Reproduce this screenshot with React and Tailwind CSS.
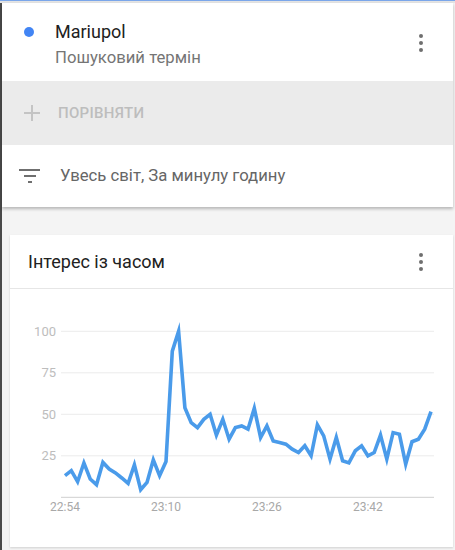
import React from 'react'

// interest values, one per minute starting 22:54
const values = [
  13, 16, 9.4, 20.7, 11, 7.6, 21, 17, 14.7, 11.6, 8.4, 19.5, 4.6, 9, 22.5, 13, 21.5, 88, 100, 54,
  45, 42, 47, 50, 37.5, 47, 35, 42, 43, 41, 53.6, 36, 43, 34, 33, 32, 29, 27, 31, 25,
  43.6, 37, 23, 36, 22, 20.7, 28, 31, 25, 27, 37.5, 23, 39, 38, 20, 33.5, 35, 41, 51.6,
]

const X0 = 65
const STEP = 6.31
const BASE = 498.3
const SCALE = 1.66

function Kebab() {
  return (
    <div className="flex flex-col items-center gap-[3px]">
      <span className="w-[4px] h-[4px] rounded-full bg-[#6f6f6f]" />
      <span className="w-[4px] h-[4px] rounded-full bg-[#6f6f6f]" />
      <span className="w-[4px] h-[4px] rounded-full bg-[#6f6f6f]" />
    </div>
  )
}

function Chart() {
  const pts = values.map((v, i) => `${(X0 + i * STEP).toFixed(1)},${(BASE - v * SCALE).toFixed(1)}`).join(' ')
  const grid = [100, 75, 50, 25]
  const times = [
    { t: '22:54', i: 0 },
    { t: '23:10', i: 16 },
    { t: '23:26', i: 32 },
    { t: '23:42', i: 48 },
  ]
  return (
    <svg width="442" height="258" viewBox="10 290 442 258" className="block">
      {grid.map((g) => (
        <g key={g}>
          <line x1="61" x2="434" y1={BASE - g * SCALE} y2={BASE - g * SCALE} stroke="#ebebeb" strokeWidth="1" />
          <text
            x="56"
            y={BASE - g * SCALE + 4.5}
            textAnchor="end"
            fontSize="13"
            fill="#bdbdbd"
            fontFamily="Roboto, sans-serif"
          >
            {g}
          </text>
        </g>
      ))}
      <line x1="61" x2="434" y1={BASE} y2={BASE} stroke="#cfcfcf" strokeWidth="1" />
      {times.map((t) => (
        <text
          key={t.t}
          x={X0 + t.i * STEP}
          y="512"
          textAnchor="middle"
          fontSize="12"
          fill="#a8a8a8"
          fontFamily="Roboto, sans-serif"
        >
          {t.t}
        </text>
      ))}
      <polyline points={pts} fill="none" stroke="#4a9bea" strokeWidth="3.6" strokeLinejoin="miter" strokeMiterlimit="6" />
    </svg>
  )
}

export default function App() {
  return (
    <div className="w-[455px] h-[550px] overflow-hidden bg-[#f4f4f4] flex flex-col font-['Roboto',sans-serif]">
      {/* top edge */}
      <div className="h-[1px] bg-[#7aa6ea]" />
      <div className="h-[2px] bg-[#e3e3e3]" />

      <div className="flex flex-1">
        <div className="w-[2px] bg-[#4a4a4a]" />

        <div className="flex-1 mr-[2px] flex flex-col">
          {/* search term panel */}
          <div className="bg-white shadow-[0_2px_3px_rgba(0,0,0,0.25)] z-10">
            <div className="h-[78px] flex items-start pl-[22px] pr-[30px] pt-[17px]">
              <span className="mt-[7px] w-[10px] h-[10px] rounded-full bg-[#4285f4]" />
              <div className="ml-[21px] flex-1">
                <p className="text-[18px] leading-[24px] text-[#212121]">Mariupol</p>
                <p className="text-[16.7px] leading-[22px] text-[#757575] mt-[3px]">Пошуковий термін</p>
              </div>
              <div className="mt-[14px]">
                <Kebab />
              </div>
            </div>

            <div className="h-[64px] bg-[#ebebeb] flex items-center pl-[21px]">
              <svg width="18" height="18" viewBox="0 0 18 18">
                <path d="M9 1v16M1 9h16" stroke="#c4c4c4" strokeWidth="2" />
              </svg>
              <span className="ml-[17px] text-[15px] font-medium tracking-[0.3px] text-[#bdbdbd]">ПОРІВНЯТИ</span>
            </div>

            <div className="h-[62px] flex items-center pl-[17px]">
              <svg width="22" height="14" viewBox="0 0 22 14">
                <path d="M0 1h21M5 7h12M9 13h4" stroke="#6f6f6f" strokeWidth="2" />
              </svg>
              <span className="ml-[19px] text-[16.7px] text-[#666666]">Увесь світ, За минулу годину</span>
            </div>
          </div>

          {/* interest over time card */}
          <div className="mt-[28px] ml-[8px] bg-white shadow-[0_1px_2px_rgba(0,0,0,0.15)] flex flex-col">
            <div className="h-[54px] flex items-center justify-between pl-[18px] pr-[30px] border-b border-[#e6e6e6]">
              <span className="text-[18px] text-[#212121]">Інтерес із часом</span>
              <Kebab />
            </div>
            <Chart />
          </div>
        </div>
      </div>
    </div>
  )
}
